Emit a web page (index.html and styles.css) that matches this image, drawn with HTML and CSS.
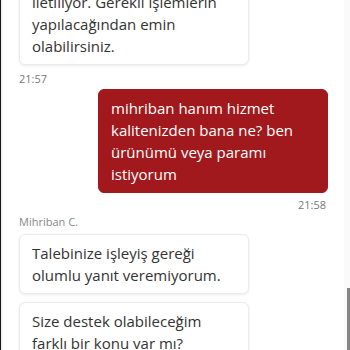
FILE: index.html
```html
<!DOCTYPE html>
<html>
<head>
  <meta charset="UTF-8" />
  <link rel="stylesheet" href="styles.css">
</head>
<body>
  <div class="frame">
    <div class="edge"></div>
    <div class="chat">
      <div class="messages">
        <div class="group agent">
          <div class="bubble">Şikayetiniz ilgili birime iletiliyor. Gerekli işlemlerin yapılacağından emin olabilirsiniz.</div>
          <div class="time">21:57</div>
        </div>
        <div class="group user">
          <div class="bubble">mihriban hanım hizmet kalitenizden bana ne? ben ürünümü veya paramı istiyorum</div>
          <div class="time">21:58</div>
        </div>
        <div class="group agent">
          <div class="sender">Mihriban C.</div>
          <div class="bubble">Talebinize işleyiş gereği olumlu yanıt veremiyorum.</div>
          <div class="bubble">Size destek olabileceğim farklı bir konu var mı?</div>
        </div>
      </div>
    </div>
    <div class="scrollbar"><div class="thumb"></div></div>
  </div>
</body>
</html>
```

FILE: styles.css
```css
* { box-sizing: border-box; }
html, body {
  margin: 0;
  height: 100%;
  overflow: hidden;
}
body {
  font-family: "Open Sans", "Noto Sans", sans-serif;
  background: #ffffff;
  color: #333;
}
.frame {
  display: flex;
  height: 350px;
}
.edge {
  width: 3px;
  background: #161616;
  border-right: 2px solid #f3f3f3;
}
.chat {
  flex: 1;
  overflow: hidden;
  padding: 0 16px 0 16px;
}
.messages {
  margin-top: -39px;
  display: flex;
  flex-direction: column;
}
.group {
  display: flex;
  flex-direction: column;
}
.group.user {
  align-items: flex-end;
}
.bubble {
  width: 230px;
  font-size: 15px;
  line-height: 22px;
  padding: 7px 12px;
  border-radius: 6px;
}
.agent .bubble {
  background: #fff;
  border: 1px solid #ebebeb;
  box-shadow: 0 1px 3px rgba(0, 0, 0, 0.08);
}
.agent .bubble + .bubble {
  margin-top: 8px;
}
.user .bubble {
  background: #a1191c;
  color: #fff;
  border: 1px solid #a1191c;
}
.time {
  font-size: 11px;
  color: #777;
  line-height: 15px;
}
.agent .time {
  margin: 6px 0 3px 0;
}
.user .time {
  margin: 4px 2px 2px 0;
}
.sender {
  font-size: 11px;
  color: #888;
  line-height: 15px;
  margin-bottom: 5px;
}
.scrollbar {
  width: 6px;
  background: #fafafa;
  display: flex;
  flex-direction: column;
  justify-content: flex-end;
}
.thumb {
  height: 62px;
  margin-left: 3px;
  background: #858585;
}
```
